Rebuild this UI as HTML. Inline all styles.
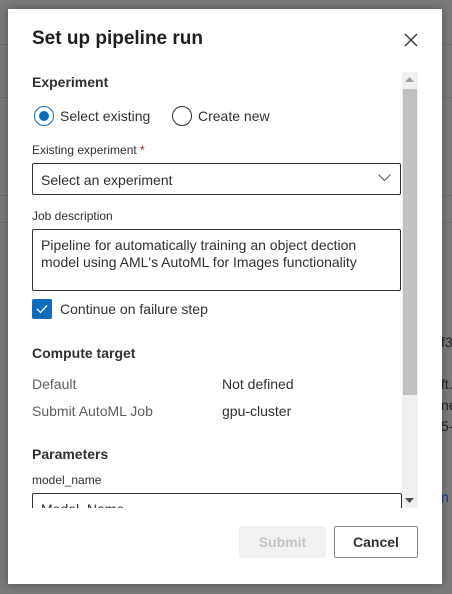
<!DOCTYPE html>
<html><head><meta charset="utf-8"><style>
*{margin:0;padding:0;box-sizing:border-box}
body{width:452px;height:594px;background:#7a7a7a;font-family:"Liberation Sans",sans-serif;position:relative;overflow:hidden;color:#323130}
.a{position:absolute;white-space:nowrap}
.dlg{position:absolute;left:8px;top:9px;width:434px;height:575px;background:#fff;box-shadow:0 0 8px rgba(0,0,0,.3)}
.lbl{font-size:12px;color:#323130}
.t14{font-size:14px}
.h{font-size:14px;font-weight:bold}
</style></head><body>
<div class="a" style="left:0;top:44px;width:452px;height:1px;background:#6e6e6e"></div>
<div class="a" style="left:0;top:97px;width:452px;height:1px;background:#6e6e6e"></div>
<div class="a" style="left:0;top:195px;width:452px;height:1px;background:#6e6e6e"></div>
<div class="a" style="left:0;top:222px;width:452px;height:1px;background:#6e6e6e"></div>
<div class="a" style="left:441px;top:334px;font-size:14px;color:#222">f3</div>
<div class="a" style="left:441px;top:376px;font-size:14px;color:#222">ft.</div>
<div class="a" style="left:441px;top:397px;font-size:14px;color:#222">ne</div>
<div class="a" style="left:441px;top:418px;font-size:14px;color:#222">5-</div>
<div class="a" style="left:441px;top:489px;font-size:14px;color:#1a3a7a">n</div>
<div class="dlg"></div>
<div class="a" style="left:32px;top:28px;font-size:19px;font-weight:bold;color:#201f1e">Set up pipeline run</div>
<svg class="a" style="left:404px;top:33px" width="14" height="14"><path d="M1 1L13 13M13 1L1 13" stroke="#323130" stroke-width="1.3"/></svg>
<div class="a" style="left:402px;top:72px;width:16px;height:436px;background:#f0f0f0"></div>
<div class="a" style="left:403px;top:89px;width:14px;height:306px;background:#c1c1c1"></div>
<svg class="a" style="left:405px;top:77px" width="9" height="6"><path d="M0 5L4.5 0L9 5Z" fill="#a3a3a3"/></svg>
<svg class="a" style="left:405px;top:498px" width="9" height="6"><path d="M0 0L4.5 5L9 0Z" fill="#505050"/></svg>
<div class="a h" style="left:32px;top:74px">Experiment</div>
<div class="a" style="left:34px;top:106px;width:20px;height:20px;border:1.5px solid #0f6cbd;border-radius:50%"></div>
<div class="a" style="left:39px;top:111px;width:10px;height:10px;background:#0f6cbd;border-radius:50%"></div>
<div class="a t14" style="left:60px;top:108px">Select existing</div>
<div class="a" style="left:172px;top:106px;width:20px;height:20px;border:1.5px solid #323130;border-radius:50%"></div>
<div class="a t14" style="left:198px;top:108px">Create new</div>
<div class="a lbl" style="left:32px;top:143px">Existing experiment <span style="color:#a4262c">*</span></div>
<div class="a" style="left:32px;top:163px;width:369px;height:32px;border:1px solid #323130;border-radius:2px"></div>
<div class="a t14" style="left:41px;top:172px">Select an experiment</div>
<svg class="a" style="left:378px;top:174px" width="13" height="8"><path d="M0.5 0.5L6.5 6.5L12.5 0.5" stroke="#605e5c" fill="none" stroke-width="1"/></svg>
<div class="a lbl" style="left:32px;top:209px">Job description</div>
<div class="a" style="left:32px;top:229px;width:369px;height:62px;border:1px solid #323130;border-radius:2px"></div>
<div class="a t14" style="left:41px;top:237px;line-height:17px">Pipeline for automatically training an object dection<br>model using AML's AutoML for Images functionality</div>
<div class="a" style="left:32px;top:299px;width:20px;height:20px;background:#0f6cbd;border-radius:2px"></div>
<svg class="a" style="left:36px;top:304px" width="12" height="10"><path d="M1 5L4.5 8.5L11 1.5" stroke="#fff" fill="none" stroke-width="1.3"/></svg>
<div class="a t14" style="left:60px;top:301px">Continue on failure step</div>
<div class="a h" style="left:32px;top:345px">Compute target</div>
<div class="a t14" style="left:32px;top:376px;color:#605e5c">Default</div>
<div class="a t14" style="left:222px;top:376px">Not defined</div>
<div class="a t14" style="left:32px;top:403px;color:#605e5c">Submit AutoML Job</div>
<div class="a t14" style="left:222px;top:403px">gpu-cluster</div>
<div class="a h" style="left:32px;top:446px">Parameters</div>
<div class="a lbl" style="left:32px;top:473px">model_name</div>
<div class="a" style="left:32px;top:493px;width:370px;height:15px;border:1px solid #323130;border-bottom:none;border-radius:2px 2px 0 0;overflow:hidden"><div class="a t14" style="left:8px;top:7px">Model_Name</div></div>
<div class="a" style="left:239px;top:526px;width:87px;height:32px;background:#f3f2f1;border-radius:2px;font-size:14px;font-weight:bold;color:#c8c6c4;text-align:center;line-height:32px">Submit</div>
<div class="a" style="left:334px;top:526px;width:84px;height:32px;border:1px solid #8a8886;border-radius:2px;font-size:14px;font-weight:bold;color:#323130;text-align:center;line-height:30px">Cancel</div>
</body></html>
